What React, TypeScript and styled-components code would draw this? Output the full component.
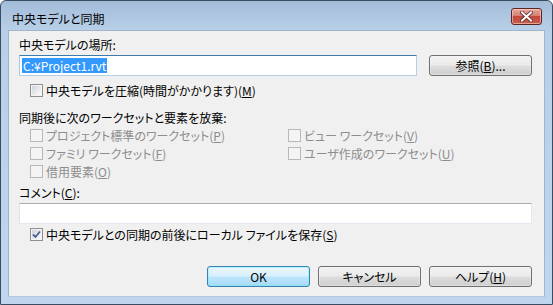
import styled, { createGlobalStyle } from "styled-components";

const GlobalStyle = createGlobalStyle`
  html, body {
    margin: 0;
    padding: 0;
    background: #ffffff;
  }
  body {
    font-family: "Noto Sans CJK JP", "Liberation Sans", sans-serif;
    font-size: 12px;
    font-feature-settings: "palt";
  }
`

const Window = styled.div`
  width: 553px;
  height: 305px;
  box-sizing: border-box;
  border: 1px solid #3a4c62;
  border-radius: 6px 6px 0 0;
  background: linear-gradient(to bottom, #a3bcd8 0, #b8cfe8 29px, #bfd6ee 100%);
  display: flex;
  flex-direction: column;
`

const TitleBar = styled.div`
  height: 29px;
  display: flex;
  align-items: center;
  justify-content: space-between;
  padding: 0 10px 0 11px;
  flex-shrink: 0;
`

const Title = styled.span`
  font-size: 12px;
  color: #000;
  line-height: 15px;
  margin-top: 5px;
`

const CloseButton = styled.div`
  width: 31px;
  height: 17px;
  box-sizing: border-box;
  border: 1px solid #5f2424;
  border-radius: 3px;
  background: linear-gradient(to bottom, #e9a99c 0%, #d47f71 45%, #c14a3c 50%, #c95c4a 100%);
  box-shadow: inset 0 0 0 1px rgba(255, 220, 210, 0.55);
  display: flex;
  align-items: center;
  justify-content: center;
  margin-top: 1px;
`

const Client = styled.div`
  flex: 1;
  margin: 0 7px 7px 7px;
  background: #f0f0f0;
  border: 1px solid #9fb5cc;
  border-bottom-color: #b4c9de;
  box-sizing: border-box;
  padding: 6px 12px 0 10px;
  display: flex;
  flex-direction: column;
`

const Label = styled.div<{ $disabled?: boolean }>`
  line-height: 15px;
  height: 15px;
  color: ${p => (p.$disabled ? "#8d8d8d" : "#000")};
  white-space: nowrap;
`

const Row = styled.div`
  display: flex;
  align-items: center;
  gap: 12px;
  margin-top: 3px;
`

const TextField = styled.div<{ $focused?: boolean; $width?: number }>`
  height: 21px;
  box-sizing: border-box;
  width: ${p => (p.$width ? `${p.$width}px` : "100%")};
  background: #fff;
  border: 1px solid ${p => (p.$focused ? "#b5cfe7" : "#e3e9ef")};
  border-top-color: ${p => (p.$focused ? "#3d7bad" : "#abadb3")};
  border-left-color: ${p => (p.$focused ? "#a4c9e3" : "#e2e3ea")};
  border-radius: 1px;
  display: flex;
  align-items: center;
  padding-left: 2px;
`

const Selected = styled.span`
  background: #3399ff;
  color: #fff;
  line-height: 15px;
  padding: 0 1px;
`

const Button = styled.div<{ $default?: boolean; $width?: number }>`
  width: ${p => p.$width ?? 103}px;
  height: 21px;
  box-sizing: border-box;
  border: 1px solid ${p => (p.$default ? "#3c7fb1" : "#707070")};
  border-radius: 3px;
  background: ${p =>
    p.$default
      ? "linear-gradient(to bottom, #eaf6fd 0%, #d9f0fc 48%, #bee6fd 52%, #a7d9f5 100%)"
      : "linear-gradient(to bottom, #f2f2f2 0%, #ebebeb 48%, #dddddd 52%, #cfcfcf 100%)"};
  box-shadow: inset 0 0 0 1px ${p => (p.$default ? "#48fdfd" : "#fcfcfc")}55;
  display: flex;
  align-items: center;
  justify-content: center;
  line-height: 15px;
  color: #000;
  flex-shrink: 0;
`

const CheckRow = styled.div<{ $disabled?: boolean }>`
  display: flex;
  align-items: center;
  gap: 3px;
  height: 18px;
  padding-left: 11px;
  color: ${p => (p.$disabled ? "#8d8d8d" : "#000")};
  white-space: nowrap;
  line-height: 15px;
  overflow: hidden;
`

const Box = styled.span<{ $disabled?: boolean }>`
  width: 13px;
  height: 13px;
  box-sizing: border-box;
  border: 1px solid ${p => (p.$disabled ? "#b8b8b8" : "#8e8f8f")};
  background: ${p =>
    p.$disabled
      ? "#f4f4f4"
      : "linear-gradient(135deg, #cbcfd5 0%, #f2f2f2 70%, #fafafa 100%)"};
  box-shadow: inset 0 0 0 1px #f4f4f4;
  display: flex;
  align-items: center;
  justify-content: center;
  flex-shrink: 0;
`

const Grid = styled.div`
  display: grid;
  grid-template-columns: 258px 1fr;
  grid-auto-rows: 18px;
  margin-top: 1px;
`

const Section = styled.div<{ $top: number }>`
  margin-top: ${p => p.$top}px;
`

const Footer = styled.div`
  display: flex;
  justify-content: flex-end;
  gap: 8px;
  margin-top: 23px;
`

function Check({ label, checked, disabled }: { label: React.ReactNode; checked?: boolean; disabled?: boolean }) {
  return (
    <CheckRow $disabled={disabled}>
      <Box $disabled={disabled}>
        {checked && (
          <svg width="9" height="9" viewBox="0 0 9 9">
            <path d="M1 4.5 L3.5 7 L8 1.5" fill="none" stroke="#4a5f97" strokeWidth="1.8" />
          </svg>
        )}
      </Box>
      <span>{label}</span>
    </CheckRow>
  )
}

export default function App() {
  return (
    <>
      <GlobalStyle />
      <Window>
        <TitleBar>
          <Title>中央モデルと同期</Title>
          <CloseButton>
            <svg width="13" height="11" viewBox="0 0 13 11">
              <path d="M2 1.5 L11 9.5 M11 1.5 L2 9.5" stroke="#5a2a2a" strokeWidth="3.6" strokeLinecap="square" />
              <path d="M2 1.5 L11 9.5 M11 1.5 L2 9.5" stroke="#ffffff" strokeWidth="2" strokeLinecap="square" />
            </svg>
          </CloseButton>
        </TitleBar>
        <Client>
          <Label>中央モデルの場所:</Label>
          <Row>
            <TextField $focused $width={399}>
              <Selected>C:¥Project1.rvt</Selected>
            </TextField>
            <Button>参照(<u>B</u>)...</Button>
          </Row>
          <Section $top={5}>
            <Check label={<>中央モデルを圧縮(時間がかかります)(<u>M</u>)</>} />
          </Section>
          <Section $top={11}>
            <Label>同期後に次のワークセットと要素を放棄:</Label>
          </Section>
          <Grid>
            <Check disabled label={<>プロジェクト標準のワークセット(<u>P</u>)</>} />
            <Check disabled label={<>ビュー ワークセット(<u>V</u>)</>} />
            <Check disabled label={<>ファミリ ワークセット(<u>F</u>)</>} />
            <Check disabled label={<>ユーザ作成のワークセット(<u>U</u>)</>} />
            <Check disabled label={<>借用要素(<u>O</u>)</>} />
          </Grid>
          <Section $top={5}>
            <Label>コメント(<u>C</u>):</Label>
          </Section>
          <Row>
            <TextField />
          </Row>
          <Section $top={1}>
            <Check checked label={<>中央モデルとの同期の前後にローカル ファイルを保存(<u>S</u>)</>} />
          </Section>
          <Footer>
            <Button $default>OK</Button>
            <Button>キャンセル</Button>
            <Button>ヘルプ(<u>H</u>)</Button>
          </Footer>
        </Client>
      </Window>
    </>
  )
}
